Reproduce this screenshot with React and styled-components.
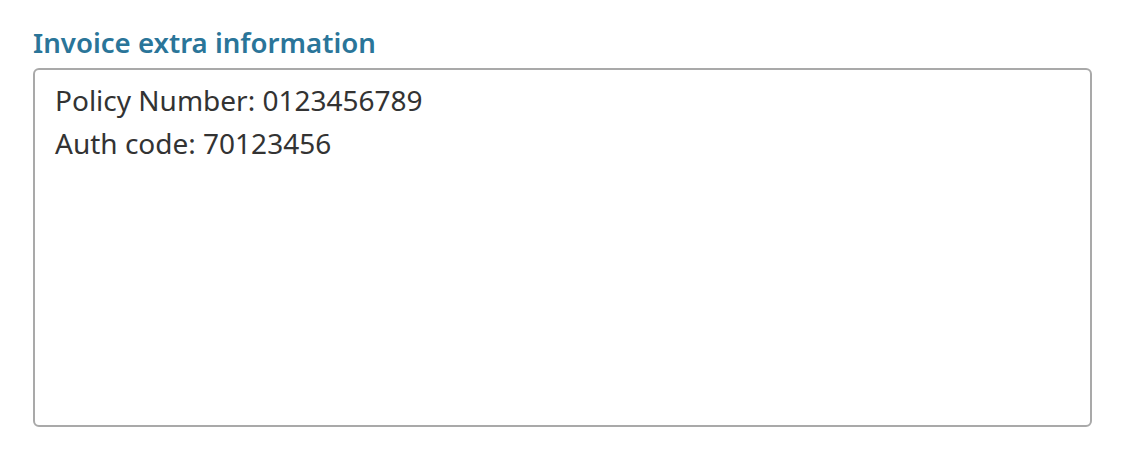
import React from 'react';
import styled, { createGlobalStyle } from 'styled-components';

const GlobalStyle = createGlobalStyle`
  * { box-sizing: border-box; }
  body {
    margin: 0;
    background: #fff;
    font-family: "Noto Sans", "Liberation Sans", sans-serif;
  }
`;

const Field = styled.div`
  padding: 24px 36px 0 33px;
  display: flex;
  flex-direction: column;
  gap: 8px;
`;

const Label = styled.label`
  font-size: 27.6px;
  font-weight: 600;
  line-height: 36px;
  color: #2a7599;
`;

const TextArea = styled.textarea`
  width: 100%;
  height: 359px;
  border: 2px solid #a9a9a9;
  border-radius: 6px;
  padding: 9px 20px;
  font-family: inherit;
  font-size: 28px;
  line-height: 43px;
  color: #333;
  resize: none;
  outline: none;
`;

export default function App() {
  return (
    <>
      <GlobalStyle />
      <Field>
        <Label htmlFor='extra'>Invoice extra information</Label>
        <TextArea
          id='extra'
          defaultValue={'Policy Number: 0123456789\nAuth code: 70123456'}
        />
      </Field>
    </>
  );
}
